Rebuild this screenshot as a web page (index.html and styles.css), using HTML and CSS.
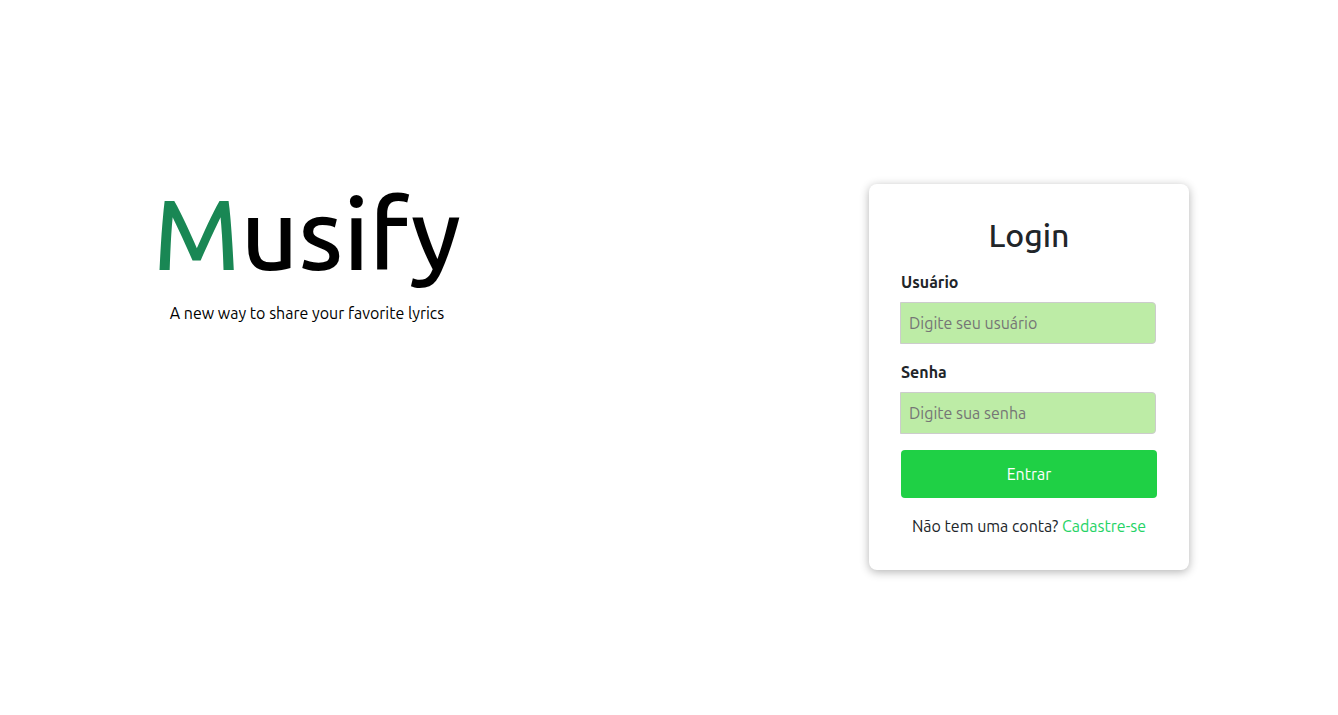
FILE: index.html
```html
<!DOCTYPE html>
<html lang="pt-BR">
<head>
<meta charset="utf-8">
<title>Musify</title>
<link rel="stylesheet" href="styles.css">
</head>
<body>
<main class="page">
  <section class="brand">
    <h1 class="brand-name"><span class="brand-initial">M</span>usify</h1>
    <p class="brand-tagline">A new way to share your favorite lyrics</p>
  </section>
  <section class="login">
    <form class="card">
      <h2 class="card-title">Login</h2>
      <label class="label" for="user">Usuário</label>
      <input class="field" id="user" type="text" placeholder="Digite seu usuário">
      <label class="label" for="password">Senha</label>
      <input class="field" id="password" type="password" placeholder="Digite sua senha">
      <button class="submit" type="submit">Entrar</button>
      <p class="signup">Não tem uma conta? <a class="signup-link" href="#">Cadastre-se</a></p>
    </form>
  </section>
</main>
</body>
</html>
```

FILE: styles.css
```css
* {
  box-sizing: border-box;
}

body {
  margin: 0;
  background: #fff;
  color: #212529;
  font: 16px/24px Ubuntu, "Noto Sans", sans-serif;
}

.page {
  display: grid;
  grid-template-columns: 1fr 1fr;
  column-gap: 102px;
  align-items: start;
  min-height: 100vh;
  padding: 184px 0 32px;
}

.brand {
  padding-right: 4px;
  color: #000;
  text-align: center;
}

.brand-name {
  margin: 0 0 19px;
  font-size: 100px;
  font-weight: 500;
  line-height: 98px;
}

.brand-initial {
  color: #198754;
}

.brand-tagline {
  margin: 0;
}

.login {
  display: flex;
  justify-content: center;
}

.card {
  display: flex;
  flex-direction: column;
  width: 320px;
  padding: 32px;
  background: #fff;
  border-radius: 8px;
  box-shadow: 0 2px 10px rgba(0, 0, 0, 0.3);
}

.card-title {
  margin: 0 0 16px;
  font-size: 32px;
  font-weight: 500;
  line-height: 38px;
  text-align: center;
}

.label {
  margin-bottom: 8px;
  font-weight: 600;
}

.field {
  height: 42px;
  margin: 0 1px 16px -1px;
  padding: 8px;
  border: 1px solid #ccc;
  border-radius: 0 4px 4px 0;
  background: #bdeca6;
  font: inherit;
}

.field::placeholder {
  color: #757575;
}

.submit {
  height: 48px;
  margin: 0 0 16px;
  border: 0;
  border-radius: 4px;
  background: #1fd045;
  color: #fff;
  font: inherit;
}

.signup {
  margin: 0;
  text-align: center;
}

.signup-link {
  color: #25d366;
  text-decoration: none;
}
```
